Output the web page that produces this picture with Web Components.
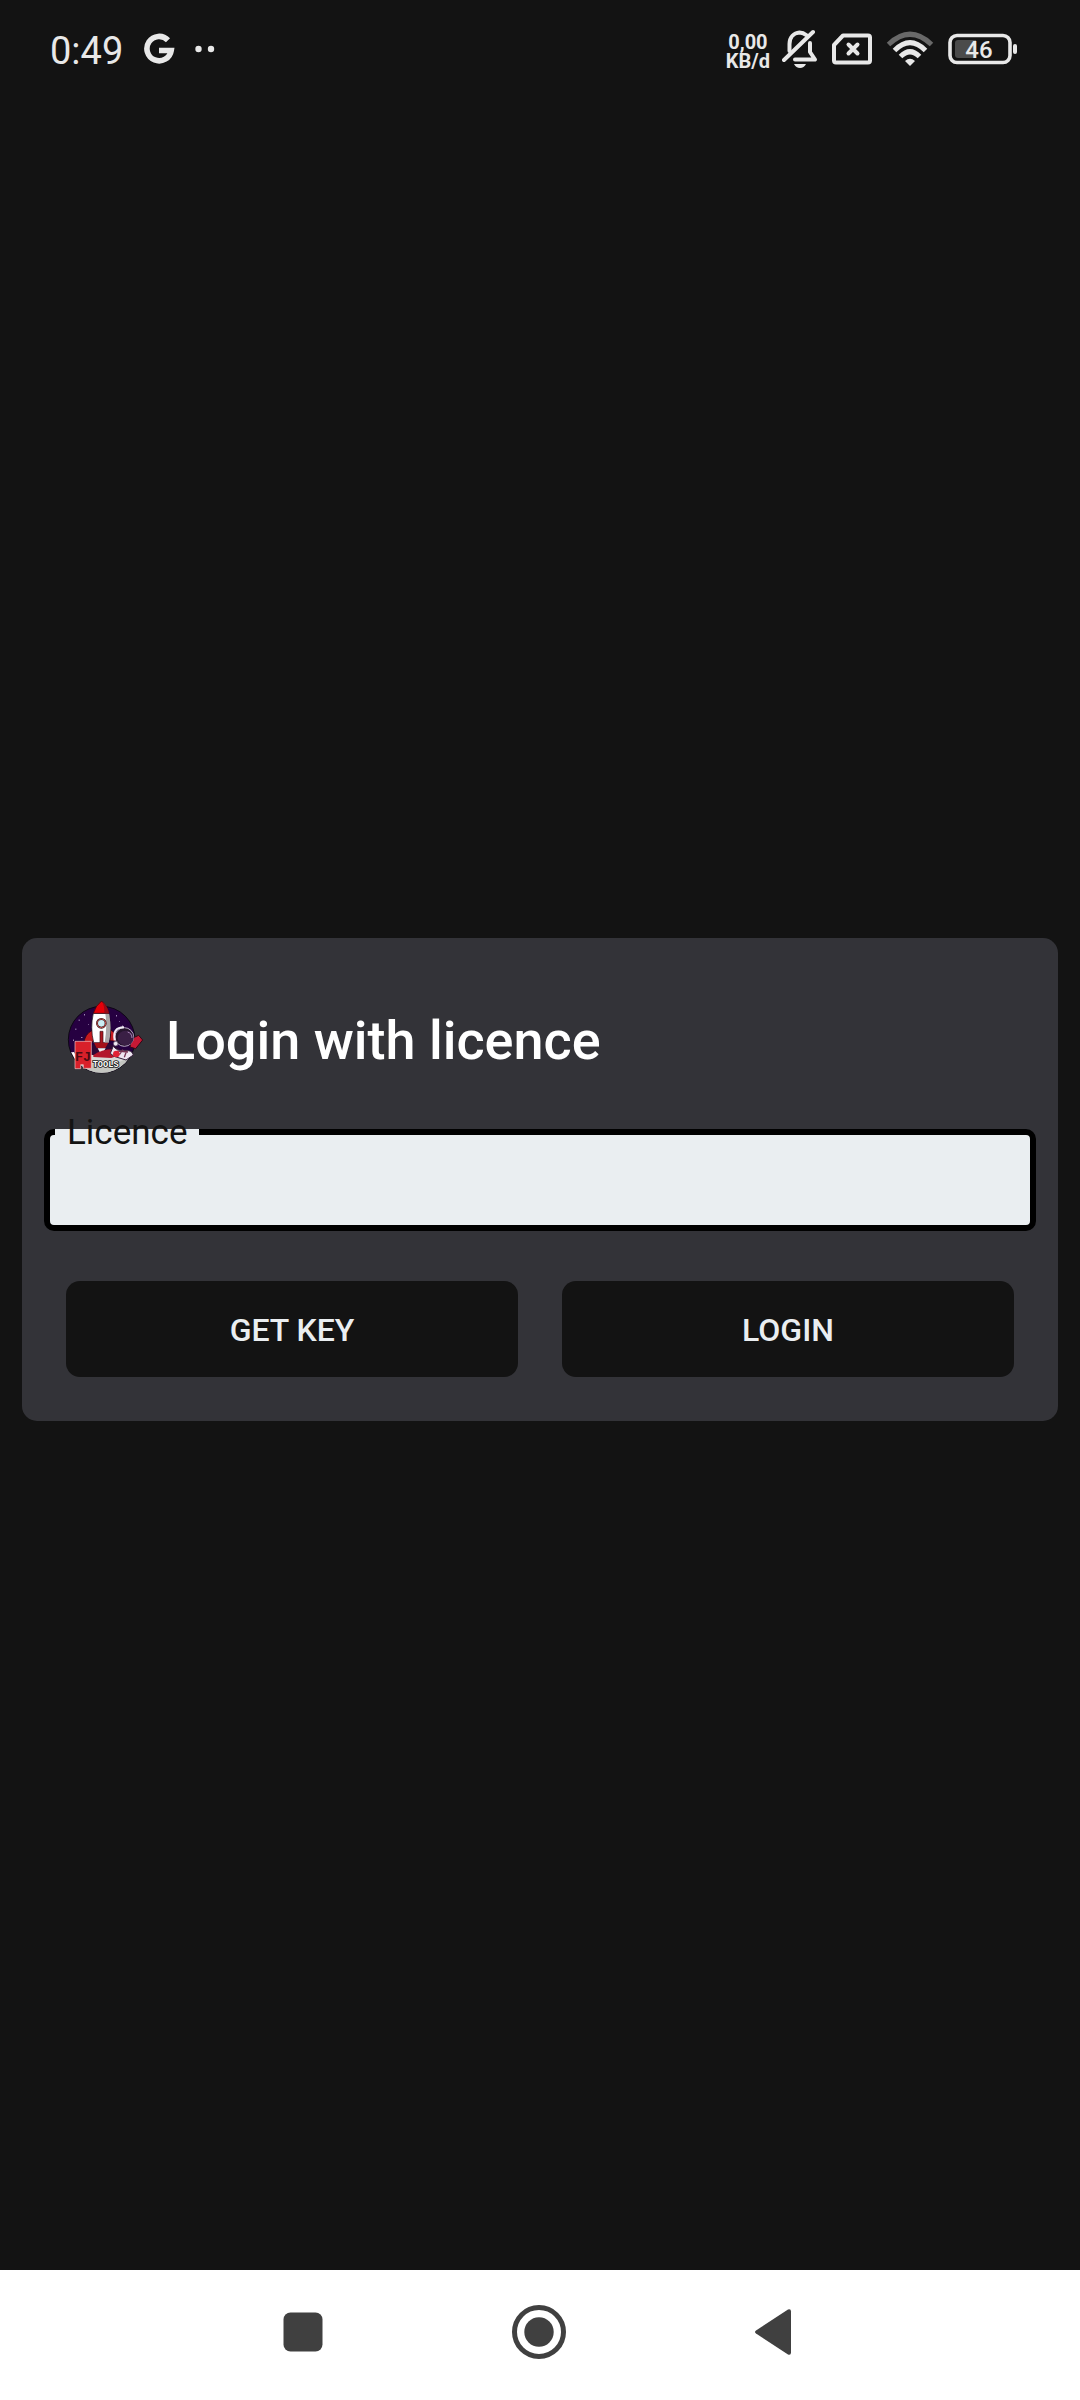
<!DOCTYPE html>
<html lang="en">
<head>
<meta charset="utf-8">
<meta name="viewport" content="width=device-width, initial-scale=1">
<title>Login with licence</title>
<style>
  body { margin: 0; background: #131313; color: #fff; font-family: Roboto, "Liberation Sans", sans-serif; }
</style>
</head>
<body>
<app-screen>
  <status-bar slot="top"></status-bar>
  <login-card heading="Login with licence">
    <app-logo slot="logo"></app-logo>
    <text-field label="Licence"></text-field>
    <action-button slot="actions">GET KEY</action-button>
    <action-button slot="actions">LOGIN</action-button>
  </login-card>
  <nav-bar slot="bottom"></nav-bar>
</app-screen>
<script>
function define(name, html, setup) {
  const template = document.createElement('template');
  template.innerHTML = html;
  customElements.define(name, class extends HTMLElement {
    constructor() {
      super();
      this.attachShadow({ mode: 'open' }).append(template.content.cloneNode(true));
    }
    connectedCallback() { if (setup) setup(this, this.shadowRoot); }
  });
}

define('app-screen', `
<style>
  :host { display: flex; flex-direction: column; min-height: 100vh; }
  main { flex: 1; display: flex; flex-direction: column; justify-content: center; padding: 0 22px; }
</style>
<slot name="top"></slot>
<main><slot></slot></main>
<slot name="bottom"></slot>`);

define('status-bar', `
<style>
  :host { display: flex; justify-content: space-between; align-items: center; height: 89px; padding: 8px 62px 0 50px; box-sizing: border-box; color: #e8e8e8; }
  div { display: flex; align-items: center; }
  svg { display: block; flex: none; }
  .left { gap: 20px; }
  .right { gap: 12px; }
  time { font-size: 38px; line-height: 44px; padding-top: 4px; }
  .rate { display: block; font-size: 20px; line-height: 19px; font-weight: 700; text-align: center; padding-top: 6px; }
  .rate span { display: block; }
  .wifi { margin-right: 2px; }
  text { font: 500 24px Roboto, sans-serif; }
</style>
<div class="left">
  <time>0:49</time>
  <svg width="32" height="32" viewBox="0 0 32 32" fill="none" stroke="#e8e8e8" stroke-width="5.600"><path d="M25 7.200A12.200 12.200 0 1 0 28.200 17.500H16"/></svg>
  <svg width="20" height="8" viewBox="0 0 20 8" fill="#e8e8e8"><circle cx="3.500" cy="4" r="3.200"/><circle cx="16" cy="4" r="3.200"/></svg>
</div>
<div class="right">
  <div class="rate"><span>0,00</span><span>KB/d</span></div>
  <svg width="36" height="40" viewBox="0 0 36 40" fill="none" stroke="#e8e8e8" stroke-width="4" stroke-linecap="round" stroke-linejoin="round">
    <path d="M7.500 22V15C7.500 8 12 4 17.500 3.500C21 3.500 23 5 25 6.500"/>
    <path d="M28 14V23L33 30.500H13"/>
    <path d="M2 31L31 3"/>
    <path d="M12 35H24Q22 39 18 39T12 35Z" fill="#e8e8e8" stroke="none"/>
  </svg>
  <svg width="44" height="32" viewBox="0 0 44 32" fill="none" stroke="#e8e8e8" stroke-width="4" stroke-linejoin="round" stroke-linecap="round">
    <path d="M13 2.500H38Q40 2.500 40 4.500V27.500Q40 29.500 38 29.500H6Q4 29.500 4 27.500V12Z"/>
    <path d="M18.500 11.500L27.500 20.500M27.500 11.500L18.500 20.500"/>
  </svg>
  <svg class="wifi" width="48" height="36" viewBox="0 0 48 36" fill="none" stroke="#e8e8e8" stroke-width="5">
    <path d="M2.500 13.500Q24-7 45.500 13.500" stroke="#696969"/>
    <path d="M8.500 19.500Q24 4 39.500 19.500"/>
    <path d="M14.500 25.500Q24 16 33.500 25.500"/>
    <path d="M19 30Q24 25.500 29 30L24 35Z" fill="#e8e8e8" stroke="none"/>
  </svg>
  <svg width="70" height="32" viewBox="0 0 70 32">
    <rect x="2" y="2.500" width="60" height="27" rx="7" fill="none" stroke="#e8e8e8" stroke-width="3.600"/>
    <path d="M28 7V25H10Q7 25 7 22V10Q7 7 10 7Z" fill="#4b4b4b"/>
    <rect x="65" y="11" width="4" height="10" rx="2" fill="#e8e8e8"/>
    <text x="31" y="25" text-anchor="middle" fill="#e8e8e8">46</text>
  </svg>
</div>`);

define('app-logo', `
<style>:host { display: block; } svg { display: block; width: 80px; height: 76px; } text { font-family: "Liberation Mono", monospace; font-weight: 700; }</style>
<svg viewBox="30 28 240 228" role="img" aria-label="FJ Tools">
  <defs><clipPath id="disc"><circle cx="137" cy="147" r="99"/></clipPath></defs>
  <circle cx="137" cy="147" r="100" fill="#260041" stroke="#0d0714" stroke-width="3"/>
  <g clip-path="url(#disc)">
    <ellipse cx="155" cy="246" rx="105" ry="64" fill="#d9d9d6"/>
    <path d="M60 196Q150 255 230 190V260H60Z" fill="#c4c6c1"/>
    <path d="M30 187L54 184L70 215L40 210Z" fill="#fff"/>
    <path d="M95 170L138 150L190 172L180 196L96 192Z" fill="#2e0835"/>
  </g>
  <g fill="#d9c8ee"><rect x="68" y="87" width="3" height="3"/><rect x="84" y="71" width="3" height="3"/><rect x="58" y="114" width="3" height="3"/><rect x="180" y="74" width="3" height="3"/><rect x="198" y="105" width="3" height="3"/><rect x="96" y="100" width="2" height="2"/><rect x="51" y="147" width="3" height="3"/><rect x="76" y="139" width="3" height="3"/><rect x="190" y="91" width="2" height="2"/></g>
  <path d="M110 118Q85 132 84 158L108 156L118 140ZM164 118Q183 128 184 152L162 150Z" fill="#c51a20" stroke="#28030d" stroke-width="2"/>
  <path d="M112 68H159Q168 116 158 156H113Q102 112 112 68Z" fill="#fff" stroke="#191119" stroke-width="2"/>
  <path d="M148 69H159Q168 116 158 156H146Q154 110 148 69Z" fill="#aaa7a8"/>
  <path d="M137 31Q155 47 159 68H112Q119 44 137 31Z" fill="#e50009" stroke="#28030d" stroke-width="2"/>
  <path d="M137 31Q155 47 159 68H145Q146 46 137 31Z" fill="#970b15"/>
  <circle cx="136" cy="98" r="13" fill="#cbeef5" stroke="#34161d" stroke-width="6"/><circle cx="136" cy="98" r="13" fill="none" stroke="#c3534d" stroke-width="3"/>
  <path d="M132 122H141V172H132Z" fill="#ad1820" stroke="#3b0a12" stroke-width="2"/>
  <path d="M114 156H157L148 172H122Z" fill="#a51119"/>
  <path d="M125 173H149L142 184L137 193L131 184Z" fill="#f2f0ee"/>
  <path d="M112 193Q140 174 176 176L198 191L166 202L112 199Z" fill="#b3162b"/>
  <path d="M226 144L248 134L260 148L239 174L222 169Z" fill="#c61935" stroke="#310816" stroke-width="3"/>
  <path d="M172 166Q181 181 202 179Q229 177 232 193L210 208L174 197L163 188Z" fill="#eee7f0" stroke="#35203b" stroke-width="3"/>
  <path d="M184 181L216 184M190 192L201 177M205 200L212 180" stroke="#783653" stroke-width="4"/>
  <circle cx="205" cy="139" r="28" fill="#26152d" stroke="#b9a9c4" stroke-width="3"/>
  <path d="M176 149Q168 110 204 110" fill="none" stroke="#f2edf6" stroke-width="6"/>
  <ellipse cx="209" cy="142" rx="24" ry="22" fill="#3a1f45"/>
  <path d="M215 124Q228 128 228 142" fill="none" stroke="#a986b7" stroke-width="3"/>
  <circle cx="179" cy="159" r="7" fill="#f0ebf2" stroke="#503b58" stroke-width="2"/>
  <circle cx="181" cy="190" r="10" fill="#e12235"/>
  <path d="M57 152H106V233H82V222H74V234H57Z" fill="#d9202a" stroke="#f0c9c9" stroke-width="2"/>
  <text x="57" y="211" font-size="40" fill="#4a0a12">FJ</text>
  <text x="110" y="228" font-size="26" fill="#fff" stroke="#111" stroke-width="5" paint-order="stroke">TOOLS</text>
</svg>`);

define('login-card', `
<style>
  :host { display: block; background: #333338; border-radius: 15px; padding: 62px 22px 44px; }
  header { display: flex; align-items: center; gap: 20px; height: 76px; padding: 0 22px; }
  h1 { margin: 0; padding-top: 6px; font-size: 54px; line-height: 64px; font-weight: 500; }
  .field { margin: 53px 0 50px; }
  .actions { display: grid; grid-template-columns: 1fr 1fr; gap: 44px; padding: 0 22px; }
</style>
<header><slot name="logo"></slot><h1></h1></header>
<div class="field"><slot></slot></div>
<div class="actions"><slot name="actions"></slot></div>`,
(host, root) => { root.querySelector('h1').textContent = host.getAttribute('heading'); });

define('text-field', `
<style>
  :host { display: block; position: relative; }
  input { display: block; width: 100%; height: 102px; box-sizing: border-box; margin: 0; padding: 0 18px; border: 6px solid #000; border-radius: 10px; background: #eaeef1; color: #131313; font: 34px Roboto, sans-serif; outline: none; }
  label { position: absolute; left: 11px; top: -16px; padding: 0 12px; font-size: 35px; line-height: 40px; color: #131313; background: linear-gradient(transparent 16px, #eaeef1 16px); }
</style>
<input id="value" type="text"><label for="value"></label>`,
(host, root) => { root.querySelector('label').textContent = host.getAttribute('label'); });

define('action-button', `
<style>
  :host { display: block; }
  button { display: block; width: 100%; height: 96px; border: 0; border-radius: 14px; padding: 2px 0 0; background: #131313; color: #eaeef1; font: 500 32px Roboto, sans-serif; cursor: pointer; }
</style>
<button type="button"><slot></slot></button>`);

define('nav-bar', `
<style>
  :host { display: block; background: #fff; }
  nav { display: flex; justify-content: center; align-items: center; gap: 180px; height: 130px; padding: 0 2px 6px 0; box-sizing: border-box; }
  button { display: block; padding: 0; border: 0; background: none; }
  svg { display: block; width: 56px; height: 56px; fill: #404040; }
</style>
<nav aria-label="System">
  <button type="button" aria-label="Recent apps"><svg viewBox="0 0 56 56"><rect x="8.500" y="8.500" width="39" height="39" rx="7"/></svg></button>
  <button type="button" aria-label="Home"><svg viewBox="0 0 56 56"><circle cx="28" cy="28" r="24.500" fill="none" stroke="#404040" stroke-width="5"/><circle cx="28" cy="28" r="14.700"/></svg></button>
  <button type="button" aria-label="Back"><svg viewBox="0 0 56 56"><path d="M9 26.500L41 5.500Q44 4.500 44 7.500V48.500Q44 51.500 41 50.500L9 29.500Q7 28 9 26.500Z"/></svg></button>
</nav>`);
</script>
</body>
</html>
